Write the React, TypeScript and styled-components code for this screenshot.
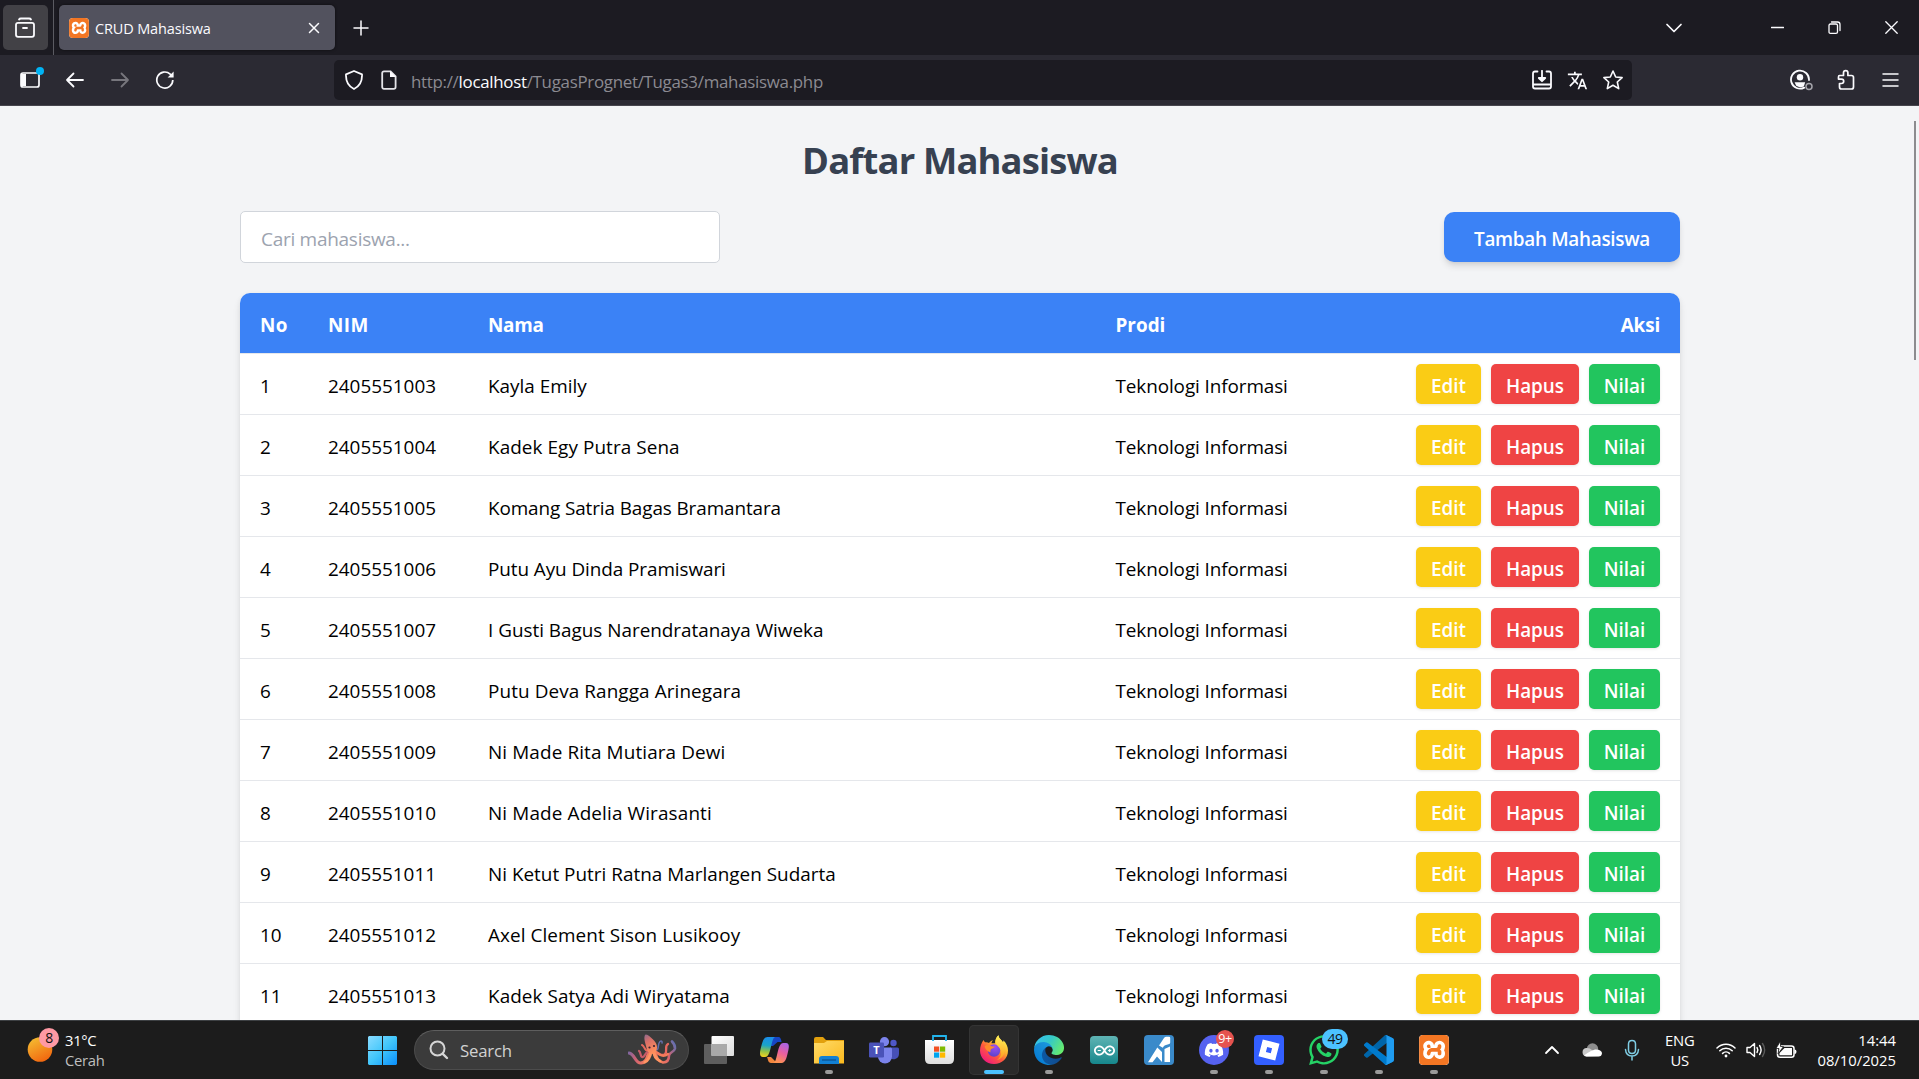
import React from "react";
import styled, { createGlobalStyle, css } from "styled-components";
import { FaDiscord, FaWhatsapp } from "react-icons/fa";
import { SiXampp, SiArduino } from "react-icons/si";
import { MdTranslate } from "react-icons/md";

const GlobalStyle = createGlobalStyle`
  * { box-sizing: border-box; }
  html, body { margin: 0; padding: 0; overflow: hidden; }
  body { font-family: "Open Sans", "Noto Sans", sans-serif; background: #1c1b22; }
  svg { display: block; flex: none; }
`;

const Desktop = styled.div`
  width: 1919px;
  height: 1079px;
  display: flex;
  flex-direction: column;
  overflow: hidden;
`;

/* ---------- browser chrome ---------- */

const TabStrip = styled.div`
  height: 55px;
  flex: none;
  display: flex;
  align-items: center;
  background: #1c1b22;
  color: #fbfbfe;
`;

const ViewButton = styled.div`
  width: 45px;
  height: 45px;
  margin-left: 3px;
  padding-right: 1px;
  border-radius: 5px;
  background: #424146;
  display: grid;
  place-items: center;
`;

const StripDivider = styled.div`
  width: 1px;
  height: 55px;
  margin: 0 5px;
  background: #5b5b62;
`;

const Tab = styled.div`
  width: 276px;
  height: 45px;
  border-radius: 5px;
  background: #52525e;
  box-shadow: 0 0 3px rgba(0, 0, 0, 0.6);
  display: flex;
  align-items: center;
  padding: 0 15px 0 10px;
`;

const TabTitle = styled.span`
  flex: 1;
  margin-left: 6px;
  font-size: 14.5px;
  letter-spacing: -0.15px;
  line-height: 20px;
  padding-top: 2px;
`;

const NewTab = styled.div`
  margin-left: 18px;
  flex: 1;
`;

const WindowControls = styled.div`
  display: flex;
  align-items: center;
  padding-right: 21px;
`;

const Toolbar = styled.div`
  height: 51px;
  flex: none;
  display: flex;
  align-items: center;
  background: #2b2a33;
  border-bottom: 1px solid #46454d;
  color: #fbfbfe;
`;

const NavButtons = styled.div`
  width: 334px;
  padding-left: 20px;
  display: flex;
  align-items: center;
  gap: 25px;
`;

const UrlBar = styled.div`
  width: 1298px;
  height: 40px;
  border-radius: 5px;
  background: #1c1b22;
  display: flex;
  align-items: center;
  padding: 0 9px 0 10px;
`;

const UrlText = styled.span`
  flex: 1;
  margin-left: 14px;
  padding-top: 3px;
  font-size: 16.9px;
  line-height: 24px;
  letter-spacing: -0.29px;
  color: #8b8a91;
  b { font-weight: 400; color: #fbfbfe; }
`;

const UrlActions = styled.div`
  display: flex;
  gap: 15px;
`;

const ToolbarActions = styled.div`
  flex: 1;
  display: flex;
  align-items: center;
  justify-content: flex-end;
  padding-right: 20px;
`;

/* ---------- page ---------- */

const Page = styled.main`
  flex: 1;
  min-height: 0;
  overflow: hidden;
  background: #f3f4f6;
  display: flex;
  justify-content: center;
  position: relative;
`;

const ScrollThumb = styled.div`
  position: absolute;
  right: 3px;
  top: 15px;
  width: 2px;
  height: 239px;
  background: #8c8c8f;
`;

const Container = styled.div`
  width: 1440px;
  flex: none;
  margin-left: 1px;
  padding-top: 30px;
`;

const Heading = styled.h1`
  margin: 0 0 30px;
  height: 45px;
  line-height: 49px;
  text-align: center;
  font-size: 36.4px;
  letter-spacing: -0.85px;
  font-weight: 700;
  color: #374151;
`;

const Controls = styled.div`
  display: flex;
  justify-content: space-between;
  align-items: center;
  height: 52px;
  margin-bottom: 30px;
`;

const SearchInput = styled.input`
  width: 480px;
  height: 52px;
  border: 1px solid #d1d5db;
  border-radius: 5px;
  padding: 4px 20px 0;
  background: #fff;
  font-family: inherit;
  font-size: 19px;
  letter-spacing: -0.28px;
  &::placeholder { color: #9ca3af; opacity: 1; }
`;

const AddButton = styled.button`
  width: 236px;
  height: 50px;
  border: 0;
  border-radius: 10px;
  padding: 4px 0 0;
  white-space: nowrap;
  background: #3b82f6;
  color: #fff;
  font: 600 18.9px/24px "Open Sans", "Noto Sans", sans-serif;
  letter-spacing: -0.3px;
  box-shadow: 0 5px 7px -1px rgba(0, 0, 0, 0.12), 0 2px 4px -2px rgba(0, 0, 0, 0.1);
`;

const Table = styled.div`
  height: 900px;
  border-radius: 10px 10px 0 0;
  background: #fff;
  overflow: hidden;
`;

const TableShadow = styled.div`
  border-radius: 10px;
  box-shadow: 0 5px 8px -1px rgba(0, 0, 0, 0.12), 0 0 5px rgba(0, 0, 0, 0.04);
`;

const rowGrid = css`
  display: grid;
  grid-template-columns: 68px 160px 627.5px 1fr 0fr;
  align-items: center;
  padding: 0 20px;
  font-size: 18.9px;
  line-height: 26px;
  white-space: nowrap;
`;

const HeaderRow = styled.div`
  ${rowGrid}
  height: 60px;
  background: #3b82f6;
  color: #fff;
  font-weight: 700;
  span { padding-top: 4px; }
`;

const Row = styled.div`
  ${rowGrid}
  height: 61px;
  border-top: 1px solid #e5e7eb;
  color: #000;
  span { padding-top: 3px; }
`;

const Cell = styled.span<{ $track?: number }>`
  letter-spacing: ${(p) => p.$track ?? 0}px;
`;

const Actions = styled.div`
  display: flex;
  gap: 10px;
`;

const tones = { edit: "#facc15", hapus: "#ef4444", nilai: "#22c55e" };

const ActionButton = styled.button<{ $tone: keyof typeof tones; $w: number }>`
  width: ${(p) => p.$w}px;
  height: 40px;
  border: 0;
  border-radius: 5px;
  padding: 4px 0 0;
  background: ${(p) => tones[p.$tone]};
  color: #fff;
  font: 600 18.9px/24px "Open Sans", "Noto Sans", sans-serif;
  letter-spacing: -0.05px;
  box-shadow: 0 1px 3px rgba(0, 0, 0, 0.1);
`;

/* ---------- taskbar ---------- */

const Taskbar = styled.footer`
  height: 59px;
  flex: none;
  background: #1c1c1c;
  border-top: 1px solid #3d4043;
  display: flex;
  align-items: center;
  color: #fff;
  font-size: 14.8px;
`;

const Weather = styled.div`
  width: 357px;
  display: flex;
  align-items: center;
  padding-left: 27px;
`;

const SunSlot = styled.div`
  position: relative;
  width: 38px;
  height: 58px;
  display: flex;
  align-items: center;
`;

const Badge = styled.span<{ $x: number; $y: number; $w: number; $h: number; $bg: string; $fg: string; $size: number }>`
  position: absolute;
  left: ${(p) => p.$x}px;
  top: ${(p) => p.$y}px;
  width: ${(p) => p.$w}px;
  height: ${(p) => p.$h}px;
  border-radius: 10px;
  background: ${(p) => p.$bg};
  color: ${(p) => p.$fg};
  font-size: ${(p) => p.$size}px;
  line-height: ${(p) => p.$h}px;
  letter-spacing: -0.4px;
  text-align: center;
`;

const TwoLines = styled.div<{ $align: string; $dim?: boolean; $track?: number }>`
  display: flex;
  flex-direction: column;
  text-align: ${(p) => p.$align};
  line-height: 20px;
  white-space: nowrap;
  letter-spacing: ${(p) => p.$track ?? 0}px;
  span:last-child { color: ${(p) => (p.$dim ? "#bfbfbf" : "#fff")}; }
`;

const Slot = styled.div<{ $active?: boolean }>`
  position: relative;
  width: 50px;
  height: 50px;
  flex: none;
  border-radius: 5px;
  display: grid;
  place-items: center;
  ${(p) => p.$active && "background: #2a2a2a; box-shadow: inset 0 0 0 1px #343434;"}
`;

const Indicator = styled.i<{ $active?: boolean }>`
  position: absolute;
  left: ${(p) => (p.$active ? 15 : 21)}px;
  top: 45px;
  width: ${(p) => (p.$active ? 20 : 8)}px;
  height: 4px;
  border-radius: 2px;
  background: ${(p) => (p.$active ? "#4cc2ff" : "#9a9a9a")};
`;

const SearchPill = styled.div`
  width: 275px;
  height: 40px;
  margin: 0 5px 0 7px;
  border-radius: 20px;
  background: #3b3b3b;
  border: 1px solid #4c4c4c;
  border-top-color: #5e5e5e;
  display: flex;
  align-items: center;
  padding: 0 11px 0 14px;
  span {
    flex: 1;
    margin-left: 11px;
    font-size: 16.8px;
    letter-spacing: -0.2px;
    color: #d2d2d2;
  }
`;

const Apps = styled.div`
  display: flex;
  gap: 5px;
`;

const AppTile = styled.div<{ $bg: string; $size?: number; $fg?: string }>`
  width: ${(p) => p.$size ?? 30}px;
  height: ${(p) => p.$size ?? 30}px;
  border-radius: 4px;
  background: ${(p) => p.$bg};
  color: ${(p) => p.$fg ?? "#fff"};
  display: grid;
  place-items: center;
  overflow: hidden;
`;

const Round = styled(AppTile)`
  border-radius: 50%;
`;

const Tray = styled.div`
  flex: 1;
  display: flex;
  align-items: center;
  justify-content: flex-end;
  padding-right: 23px;
`;

const Gap = styled.div<{ $w: number }>`
  width: ${(p) => p.$w}px;
  flex: none;
`;

const Line = ({ w, h, d, sw = 1.5, vb, color = "currentColor" }: { w: number; h: number; d: string; sw?: number; vb?: string; color?: string }) => (
  <svg width={w} height={h} viewBox={vb ?? `0 0 ${w} ${h}`} fill="none" stroke={color} strokeWidth={sw} strokeLinecap="round" strokeLinejoin="round">
    <path d={d} />
  </svg>
);

const Xampp = ({ size }: { size: number }) => (
  <AppTile $bg="linear-gradient(#fff 12%, #fff 88%)" $size={size} $fg="#f37623">
    <SiXampp size={size} />
  </AppTile>
);

const SidebarSvg = styled.svg`
  overflow: visible;
`;

const SidebarIcon = () => (
  <SidebarSvg width="20" height="24" viewBox="0 0 20 24">
    <rect x="1" y="5" width="18" height="14" rx="2" fill="none" stroke="#fbfbfe" strokeWidth="1.7" />
    <path d="M1 6h5v12H1z" fill="#fbfbfe" />
    <circle cx="20" cy="3" r="4" fill="#00b3f4" />
  </SidebarSvg>
);

const ReloadIcon = () => (
  <svg width="20" height="20" viewBox="0 0 20 20" fill="none" stroke="#fbfbfe" strokeWidth="1.7">
    <path d="M17.8 10a8 8 0 1 1-2.6-5.9L17 6" />
    <path d="M18.6 1.4v6h-6z" fill="#fbfbfe" stroke="none" />
  </svg>
);

const DocIcon = () => (
  <svg width="16" height="20" viewBox="0 0 16 20">
    <path d="M3 1.3h6.6l5 5V17a1.8 1.8 0 0 1-1.8 1.8H3A1.8 1.8 0 0 1 1.2 17V3A1.8 1.8 0 0 1 3 1.3z" fill="none" stroke="#e4e4e8" strokeWidth="1.8" />
    <path d="M9 1v6h6z" fill="#fbfbfe" />
  </svg>
);

const AccountIcon = () => (
  <svg width="24" height="22" viewBox="0 0 24 22">
    <path d="M14.2 18.6A9 9 0 1 1 19 11" fill="none" stroke="#fbfbfe" strokeWidth="1.8" strokeLinecap="round" />
    <circle cx="10" cy="8.2" r="3.2" fill="#fbfbfe" />
    <path d="M4.6 13.2h10.6l-1.4 4.2a8 8 0 0 1-7.6-.6z" fill="#fbfbfe" />
    <circle cx="19" cy="17.4" r="3" fill="none" stroke="#a5a4ab" strokeWidth="1.5" />
  </svg>
);

const WindowsIcon = () => (
  <svg width="29" height="29" viewBox="0 0 29 29">
    <defs>
      <linearGradient id="win" gradientUnits="userSpaceOnUse" x1="0" y1="0" x2="29" y2="29">
        <stop offset="0" stopColor="#8adcff" /><stop offset=".5" stopColor="#41c6fb" /><stop offset="1" stopColor="#0a8efb" />
      </linearGradient>
    </defs>
    <path fill="url(#win)" d="M1 0h13v14H0V1zM15 0h13l1 1v13H15zM0 15h14v14H1l-1-1zM15 15h14v13l-1 1H15z" />
  </svg>
);

const Magnifier = () => (
  <svg width="20" height="20" viewBox="0 0 20 20" fill="#4b4b4b" stroke="#d6d6d6" strokeWidth="2" strokeLinecap="round">
    <circle cx="8.5" cy="8.5" r="7" /><path d="M13.8 13.8l4.2 4.2" strokeWidth="2.4" />
  </svg>
);

const Octopus = () => (
  <svg width="49" height="32" viewBox="0 0 49 32" fill="none" strokeLinecap="round">
    <defs>
      <linearGradient id="octo" x1="0" y1="0" x2=".4" y2="1">
        <stop offset="0" stopColor="#8d6a8e" /><stop offset=".4" stopColor="#d96f68" /><stop offset="1" stopColor="#ff8e5c" />
      </linearGradient>
      <linearGradient id="arm" gradientUnits="userSpaceOnUse" x1="0" y1="16" x2="22" y2="24">
        <stop offset="0" stopColor="#7467a6" /><stop offset=".45" stopColor="#cf6172" /><stop offset="1" stopColor="#fb8459" />
      </linearGradient>
      <linearGradient id="armr" gradientUnits="userSpaceOnUse" x1="26" y1="22" x2="48" y2="10">
        <stop offset="0" stopColor="#fb8459" /><stop offset=".5" stopColor="#d9626c" /><stop offset="1" stopColor="#5a70b4" />
      </linearGradient>
    </defs>
    <path d="M21 18c-2 5-2 10-8 11-6 .5-6-9-12-10" stroke="url(#arm)" strokeWidth="3.2" />
    <path d="M27 18c2 5 2 9 8 10.500 5 0 6-4 6-7 1-4 5-3 6-7 .3-3-1-5-3-7" stroke="url(#armr)" strokeWidth="2.600" />
    <path d="M20 17c-4 0-3-5-6-6" stroke="#e5695e" strokeWidth="2" />
    <path d="M20 18c-4 1-3 6-6 5-2-1-1-5-3-6" stroke="#c85b68" strokeWidth="2.200" />
    <path d="M27 16c5 1 2-6 5-8.500 1.500-1 2.500 0 2 1.500" stroke="#666fae" strokeWidth="1.500" />
    <path d="M27 18c5 1 7 5 10 2s-1-8 3-10" stroke="#e8695f" strokeWidth="2.300" />
    <path d="M28 18c4 4 8 5 12 2" stroke="#f57c5b" strokeWidth="2.400" />
    <path d="M23 18c-1 5-2 8-6 10M26 18c0 5 2 7 6 9" stroke="#ff9463" strokeWidth="3" />
    <path d="M17.500.5c2 0 4.500 2 7 4.500s4.500 4.500 4.500 8c0 4-2 7-5 7-4 0-5-4-6-8-.6-3-3-9-.5-11.500z" fill="url(#octo)" />
    <circle cx="21.500" cy="13.500" r="1.100" fill="#3b2230" /><circle cx="26" cy="12" r="1.100" fill="#3b2230" />
  </svg>
);

const TaskView = () => (
  <svg width="30" height="28" viewBox="0 0 30 28">
    <defs><linearGradient id="tv" x1="0" y1="0" x2="1" y2="1"><stop offset="0" stopColor="#fff" /><stop offset="1" stopColor="#dcdcdc" /></linearGradient></defs>
    <rect y="8" width="23" height="20" rx="1" fill="#5e5e5e" />
    <rect x="7.5" width="22.5" height="20" rx="1" fill="url(#tv)" />
    <path d="M7.5 8H23v12H7.5z" fill="#a9a9a9" />
  </svg>
);

const Copilot = () => (
  <svg width="29" height="26" viewBox="0 0 29 26">
    <defs>
      <linearGradient id="cpa" x1=".3" y1="0" x2=".2" y2="1"><stop offset="0" stopColor="#1b8ee8" /><stop offset=".4" stopColor="#1aa4c8" /><stop offset=".7" stopColor="#8fc24a" /><stop offset="1" stopColor="#f7d21c" /></linearGradient>
      <linearGradient id="cpb" x1=".8" y1="0" x2=".4" y2="1"><stop offset="0" stopColor="#a765e8" /><stop offset=".5" stopColor="#ea5fa0" /><stop offset="1" stopColor="#fd9350" /></linearGradient>
    </defs>
    <path d="M8 0h10c2.6 0 3 2 3.6 5h-4L13 9H9z" fill="#1746c4" />
    <path d="M11 20l6 6h-6C8 26 8 22 7 20z" fill="#f1873e" />
    <path d="M7.500 0H15c-2 1-2.600 4-3.600 8-1.600 6-2.400 12-6.400 12H3c-3 0-3.500-3-2.600-7C1.800 7 3 0 7.500 0z" fill="url(#cpa)" />
    <path d="M21.500 26H13c2.500-1 3-4 4-8 1.600-6 2.400-12 6.400-12H26c3 0 3.300 3 2.400 7-1.400 6-2.400 13-6.900 13z" fill="url(#cpb)" />
  </svg>
);

const Folder = () => (
  <svg width="30" height="27" viewBox="0 0 30 27">
    <defs><linearGradient id="fold" x1="0" y1="0" x2="1" y2="1"><stop offset="0" stopColor="#ffdb69" /><stop offset="1" stopColor="#fbb91d" /></linearGradient></defs>
    <path d="M0 2q0-2 2-2h7l3 3h18v6H0z" fill="#e2a00d" />
    <path d="M0 6h10l3-2h17v22.500H0z" fill="url(#fold)" />
    <path d="M5 27v-5q0-3 3-3h14q3 0 3 3v5z" fill="#1280d3" />
    <path d="M8 23h14" stroke="#0c5290" strokeWidth="1.300" />
  </svg>
);

const TeamsText = styled.text`
  font: 700 11px "Open Sans", sans-serif;
  fill: #fff;
`;

const Teams = () => (
  <svg width="30" height="27" viewBox="0 0 30 27">
    <circle cx="24.500" cy="6" r="3.200" fill="#4f58c8" />
    <path d="M21 10.500h7.500q1.500 0 1.500 1.500v5a5.500 5.500 0 0 1-9 4z" fill="#4750b8" />
    <circle cx="15.500" cy="4.700" r="4.600" fill="#7b83eb" />
    <path d="M9 10.500h12.500q1.500 0 1.500 1.500v7.500a7 7 0 0 1-14 0z" fill="#7b83eb" />
    <rect y="5.500" width="15" height="15" rx="1.300" fill="#4a52b8" />
    <TeamsText x="7.500" y="17" textAnchor="middle">T</TeamsText>
  </svg>
);

const Store = () => (
  <svg width="29" height="30" viewBox="0 0 29 30">
    <defs><linearGradient id="store" x1="0" y1="0" x2="0" y2="1"><stop offset="0" stopColor="#fff" /><stop offset="1" stopColor="#dedede" /></linearGradient></defs>
    <path d="M0 5h29v19q0 5-5 5H5q-5 0-5-5z" fill="url(#store)" />
    <path d="M8 6V1h13v5" stroke="#22b4ec" strokeWidth="1.800" fill="none" />
    <path d="M9 11.500h5.200v5.200H9z" fill="#f25022" /><path d="M15 11.500h5.200v5.200H15z" fill="#7fba00" />
    <path d="M9 17.500h5.200v5.200H9z" fill="#00a4ef" /><path d="M15 17.500h5.200v5.200H15z" fill="#ffb900" />
  </svg>
);

const Firefox = () => (
  <svg width="30" height="30" viewBox="0 0 30 30">
    <defs>
      <linearGradient id="ffx" x1=".85" y1=".1" x2=".2" y2=".95"><stop offset="0" stopColor="#fff44f" /><stop offset=".35" stopColor="#ffb02e" /><stop offset=".6" stopColor="#ff5a3c" /><stop offset="1" stopColor="#f0187f" /></linearGradient>
      <linearGradient id="ffy" x1="0" y1="0" x2="0" y2="1"><stop offset="0" stopColor="#fff25a" /><stop offset="1" stopColor="#ff9a1c" /></linearGradient>
      <radialGradient id="ffg" cx=".6" cy=".2" r=".9"><stop offset="0" stopColor="#a04cf2" /><stop offset=".6" stopColor="#7049d8" /><stop offset="1" stopColor="#5a3fc0" /></radialGradient>
    </defs>
    <path d="M4.500 5c.5 1 .9 1.700 1.500 2.300C7.500 7 9 7.300 10 8c1-1.500 2.500-2.500 4-2.800-1 1-1.400 2-1.500 3H16c0-3 1-6 3.500-8 .2 3.300 3 4.600 4.500 7 .4-.7.400-1.300.300-2C27.500 8 29 12 29 15.500 29 23.500 23 29 15 29S1 23 1 15.500C1 11.500 2.500 7.500 4.500 5z" fill="url(#ffx)" />
    <circle cx="15" cy="15.500" r="6.200" fill="url(#ffg)" />
    <path d="M19.500.2c.2 3.300 3 4.600 4.500 7 2.500 4 2.600 9 .5 12.800-1.500 3-4.500 4.500-6.500 5 3-2 4.500-5 4.200-8.200C22 12.500 17 11 16.500 6.500c.1-2.500 1.200-4.800 3-6.300z" fill="url(#ffy)" />
    <path d="M5.500 11.500c2-1.800 4.500-1.800 6.500-.6 1.500.8 3 .4 3.800.6-.4 1.800-3.400 1.800-4 3-.4.900-.6 1.800-.2 2.800-2.200-.2-4.800-2-6.100-5.800z" fill="#ff8a2a" />
  </svg>
);

const Edge = () => (
  <svg width="30" height="30" viewBox="0 0 256 256">
    <defs>
      <linearGradient id="e1" x1="0" y1="0" x2="1" y2="0"><stop offset="0" stopColor="#0c59a4" /><stop offset="1" stopColor="#114a8b" /></linearGradient>
      <linearGradient id="e2" x1=".9" y1="0" x2=".1" y2="1"><stop offset="0" stopColor="#1b9de2" /><stop offset=".5" stopColor="#1489d5" /><stop offset="1" stopColor="#0078d4" /></linearGradient>
      <linearGradient id="e3" x1="0" y1=".2" x2="1" y2=".6"><stop offset="0" stopColor="#35c1f1" /><stop offset=".5" stopColor="#36c9c6" /><stop offset="1" stopColor="#66eb6e" /></linearGradient>
    </defs>
    <path fill="url(#e1)" d="M231 190.500c-3.400 1.800-6.900 3.400-10.500 4.700a101.500 101.500 0 0 1-35.900 6.500c-47.300 0-88.500-32.500-88.500-74.300 0-11.500 6.400-21.900 16.300-27.300-42.800 1.800-53.800 46.400-53.800 72.500 0 73.900 68.100 81.400 82.800 81.400 7.900 0 19.800-2.300 27-4.600l1.300-.4a128.300 128.300 0 0 0 66.600-52.800 4 4 0 0 0-5.300-5.700z" />
    <path fill="url(#e2)" d="M105.700 241.400A79.200 79.200 0 0 1 83 220.100a80.700 80.700 0 0 1 29.500-120c3.200-1.500 8.500-4.100 15.600-4a32.400 32.400 0 0 1 25.700 13 31.900 31.900 0 0 1 6.300 18.700c0-.2 24.500-79.600-80-79.600-43.900 0-80 41.600-80 78.200a130.200 130.200 0 0 0 12.100 56 128 128 0 0 0 156.400 67 75.600 75.600 0 0 1-62.800-8z" />
    <path fill="url(#e3)" d="M152.300 148.900c-.9 1-3.400 2.500-3.400 5.600 0 2.600 1.700 5.200 4.800 7.300 14.400 10.100 41.700 8.700 41.800 8.700a59.700 59.700 0 0 0 30.300-8.400 61.400 61.400 0 0 0 30.400-52.900c.3-22.400-8-37.300-11.300-43.900C223.500 23.900 177.700 0 128 0A128 128 0 0 0 0 126.200c.5-36.500 36.800-66 80-66 3.500 0 23.500.3 42 10.100 16.300 8.600 24.900 18.900 30.800 29.200 6.200 10.700 7.300 24.100 7.300 29.500 0 5.300-2.700 13.300-7.800 19.900z" />
  </svg>
);

const AiMark = () => (
  <svg width="30" height="30" viewBox="0 0 30 30" fill="#fff">
    <path d="M15 10.500l5-7.500q.8-1.200 2.500-1.200H25q1.200 0 1.200 1.200v4.500q0 1.200-1 1.500l-4 1.200q-1 .3-1.600 1.300l-.8 1.200z" />
    <path d="M13.300 12.500l4.700 4.500v10l-5-5.500-4.500 5.700H4z" />
    <path d="M20.500 14l5.500-2.500V27h-5.500z" />
  </svg>
);

const RobloxMark = () => (
  <svg width="30" height="30" viewBox="0 0 30 30">
    <path d="M8.800 4.500l16.700 4.300-4.300 16.700L4.500 21.200zM13.200 12l-1.300 4.900 4.900 1.300 1.300-4.900z" fill="#fff" fillRule="evenodd" />
  </svg>
);

const VsCode = () => (
  <svg width="30" height="30" viewBox="0 0 100 100">
    <path fill="#0065a9" d="M96.460 10.800L75.860.88a6.230 6.230 0 0 0-7.100 1.200L1.300 63.600a4.170 4.170 0 0 0 0 6.170l5.500 5a4.170 4.170 0 0 0 5.320.24l81.200-61.600c2.700-2.070 6.600-.13 6.600 3.300v-.24a6.250 6.250 0 0 0-3.500-5.630z" />
    <path fill="#007acc" d="M96.460 89.200l-20.600 9.900a6.230 6.230 0 0 1-7.100-1.200L1.300 36.400a4.170 4.170 0 0 1 0-6.170l5.500-5a4.170 4.170 0 0 1 5.320-.24l81.200 61.600c2.700 2.070 6.600.13 6.600-3.300v.24a6.250 6.250 0 0 1-3.500 5.630z" />
    <path fill="#1f9cf0" d="M75.860 99.130a6.230 6.230 0 0 1-7.100-1.200c2.300 2.300 6.240.67 6.240-2.600V4.660c0-3.260-3.940-4.900-6.240-2.600a6.230 6.230 0 0 1 7.100-1.200l20.600 9.900A6.250 6.250 0 0 1 100 16.400v67.200a6.250 6.250 0 0 1-3.540 5.630z" />
  </svg>
);

const Cloud = () => (
  <svg width="20" height="14" viewBox="0 0 20 14">
    <circle cx="10.500" cy="6" r="5.700" fill="#8e8e8e" />
    <path d="M4.500 13.500A4.300 4.300 0 0 1 4 5q3.500-.5 6 2l9 6z" fill="#c9c9c9" />
    <path d="M2 12.500q3-2.500 7-4.500 2-1 4-1.500 6-.5 7 3.500-.2 3.500-3.500 3.500h-12z" fill="#fff" />
  </svg>
);

const Wifi = () => (
  <svg width="20" height="16" viewBox="0 0 20 16" fill="none" stroke="#fff" strokeWidth="1.500" strokeLinecap="round">
    <path d="M1 6a12.500 12.500 0 0 1 18 0M3.800 8.800a8.700 8.700 0 0 1 12.400 0M6.600 11.400a4.900 4.900 0 0 1 6.800 0" />
    <circle cx="10" cy="14" r="1.400" fill="#fff" stroke="none" />
  </svg>
);

const Speaker = () => (
  <svg width="20" height="18" viewBox="0 0 20 18" fill="none" stroke="#fff" strokeWidth="1.400" strokeLinecap="round" strokeLinejoin="round">
    <path d="M1 6.500h3L8.500 2.500v13L4 11.500H1z" />
    <path d="M11 6.500q1.600 2.500 0 5M13.600 4.500q3 4.500 0 9" />
    <path d="M16.500 2.500q4.300 6.500 0 13" stroke="#5a5a5a" />
  </svg>
);

const Battery = () => (
  <svg width="21" height="18" viewBox="0 0 21 18">
    <rect x="1.500" y="5" width="16.500" height="11.300" rx="2.500" fill="none" stroke="#fff" strokeWidth="1.500" />
    <path d="M18.500 8.500q2 0 2 2.200t-2 2.200z" fill="#fff" />
    <path d="M8.500 7H16v7.300H3.500V12z" fill="#fff" />
    <path d="M4.500 0L0 7.500h3L2 13l5.500-7.500h-3z" fill="#fff" stroke="#1c1c1c" strokeWidth=".8" />
  </svg>
);

const students = [
  { nama: "Kayla Emily", track: 0 },
  { nama: "Kadek Egy Putra Sena", track: 0.08 },
  { nama: "Komang Satria Bagas Bramantara", track: -0.1 },
  { nama: "Putu Ayu Dinda Pramiswari", track: -0.07 },
  { nama: "I Gusti Bagus Narendratanaya Wiweka", track: -0.01 },
  { nama: "Putu Deva Rangga Arinegara", track: 0.1 },
  { nama: "Ni Made Rita Mutiara Dewi", track: 0.12 },
  { nama: "Ni Made Adelia Wirasanti", track: 0.14 },
  { nama: "Ni Ketut Putri Ratna Marlangen Sudarta", track: 0.01 },
  { nama: "Axel Clement Sison Lusikooy", track: 0.08 },
  { nama: "Kadek Satya Adi Wiryatama", track: 0.08 },
].map((s, i) => ({ ...s, no: i + 1, nim: String(2405551003 + i), prodi: "Teknologi Informasi" }));

export default function App() {
  return (
    <Desktop>
      <GlobalStyle />
      <TabStrip>
        <ViewButton>
          <Line w={22} h={22} sw={1.8} d="M5 2.500q.500-1 2-1h8q1.500 0 2 1M4 5.800h14q2 0 2 2v10q0 2-2 2H4q-2 0-2-2v-10q0-2 2-2zM9 11h4" />
        </ViewButton>
        <StripDivider />
        <Tab>
          <Xampp size={20} />
          <TabTitle>CRUD Mahasiswa</TabTitle>
          <Line w={12} h={12} d="M1.500 1.500l9 9M10.500 1.500l-9 9" />
        </Tab>
        <NewTab>
          <Line w={16} h={16} d="M8 1v14M1 8h14" />
        </NewTab>
        <WindowControls>
          <Line w={18} h={10} sw={1.700} d="M2 1.500l7 7 7-7" />
          <Gap $w={88} />
          <Line w={13} h={13} sw={1.300} d="M.5 6.500h12" />
          <Gap $w={44} />
          <Line w={13} h={13} sw={1.300} d="M3.500 1h6q2.500 0 2.500 2.500v6M2.500 3h5.500q1.500 0 1.500 1.500V11q0 1.300-1.500 1.300H2.500Q1 12.300 1 11V4.500Q1 3 2.500 3z" />
          <Gap $w={44} />
          <Line w={13} h={13} sw={1.300} d="M.8.8l11.400 11.400M12.200.8L.8 12.200" />
        </WindowControls>
      </TabStrip>

      <Toolbar>
        <NavButtons>
          <SidebarIcon />
          <Line w={20} h={20} sw={1.800} d="M18 10H2M8.500 3.500L2 10l6.500 6.500" />
          <Line w={20} h={20} sw={1.800} color="#77767d" d="M2 10h16M11.500 3.500L18 10l-6.500 6.500" />
          <ReloadIcon />
        </NavButtons>
        <UrlBar>
          <Line w={20} h={20} sw={1.800} d="M10 1l8 3.300c.3 6-1.500 11.500-8 14.700C3.500 15.800 1.700 10.300 2 4.300z" />
          <Gap $w={17} />
          <DocIcon />
          <UrlText>http://<b>localhost</b>/TugasPrognet/Tugas3/mahasiswa.php</UrlText>
          <UrlActions>
            <Line w={20} h={20} sw={1.800} d="M5.500 1.500H3q-2 0-2 2v13q0 2 2 2h14q2 0 2-2v-13q0-2-2-2h-2.500M1 14.500h18M10 .8v10M6.800 8L10 11.200 13.200 8z" />
            <MdTranslate size={21} />
            <Line w={20} h={20} sw={1.600} d="M10 1l2.700 6 6.400.6-4.800 4.400 1.400 6.600L10 15.200 4.300 18.600 5.700 12 .9 7.600 7.300 7z" />
          </UrlActions>
        </UrlBar>
        <ToolbarActions>
          <AccountIcon />
          <Gap $w={22} />
          <Line w={20} h={22} sw={1.700} d="M3.500 6.500h4V3.800a2.200 2.200 0 0 1 4.400 0v2.700h3.600q2 0 2 2V18q0 2-2 2h-10q-2 0-2-2v-3.500h2a2.200 2.200 0 0 0 0-4.400h-3V8q0-1.500 1-1.500z" />
          <Gap $w={26} />
          <Line w={17} h={16} sw={1.500} d="M1 2h15M1 8h15M1 14h15" />
        </ToolbarActions>
      </Toolbar>

      <Page>
        <Container>
          <Heading>Daftar Mahasiswa</Heading>
          <Controls>
            <SearchInput placeholder="Cari mahasiswa..." />
            <AddButton>Tambah Mahasiswa</AddButton>
          </Controls>
          <TableShadow>
            <Table>
              <HeaderRow>
                <Cell $track={0.3}>No</Cell>
                <Cell $track={0.4}>NIM</Cell>
                <Cell $track={-0.25}>Nama</Cell>
                <Cell>Prodi</Cell>
                <Cell $track={-0.15}>Aksi</Cell>
              </HeaderRow>
              {students.map((s) => (
                <Row key={s.no}>
                  <Cell>{s.no}</Cell>
                  <Cell>{s.nim}</Cell>
                  <Cell $track={s.track}>{s.nama}</Cell>
                  <Cell $track={-0.09}>{s.prodi}</Cell>
                  <Actions>
                    <ActionButton $tone="edit" $w={65}>Edit</ActionButton>
                    <ActionButton $tone="hapus" $w={88}>Hapus</ActionButton>
                    <ActionButton $tone="nilai" $w={71}>Nilai</ActionButton>
                  </Actions>
                </Row>
              ))}
            </Table>
          </TableShadow>
        </Container>
        <ScrollThumb />
      </Page>

      <Taskbar>
        <Weather>
          <SunSlot>
            <svg width="26" height="26" viewBox="0 0 26 26">
              <defs><linearGradient id="sun" x1=".2" y1="0" x2=".7" y2="1"><stop offset="0" stopColor="#f4bd32" /><stop offset="1" stopColor="#f2640e" /></linearGradient></defs>
              <circle cx="13" cy="12.500" r="12.300" fill="url(#sun)" />
            </svg>
            <Badge $x={12} $y={7} $w={20} $h={20} $bg="#ff99a4" $fg="#111" $size={14}>8</Badge>
          </SunSlot>
          <TwoLines $align="left" $dim $track={-0.3}>
            <span>31°C</span>
            <span>Cerah</span>
          </TwoLines>
        </Weather>
        <Slot><WindowsIcon /></Slot>
        <SearchPill>
          <Magnifier />
          <span>Search</span>
          <Octopus />
        </SearchPill>
        <Apps>
          <Slot><TaskView /></Slot>
          <Slot><Copilot /></Slot>
          <Slot><Folder /><Indicator /></Slot>
          <Slot><Teams /></Slot>
          <Slot><Store /></Slot>
          <Slot $active><Firefox /><Indicator $active /></Slot>
          <Slot><Edge /><Indicator /></Slot>
          <Slot><AppTile $bg="linear-gradient(#5fb4b4, #16878c)" $size={28}><SiArduino size={21} /></AppTile></Slot>
          <Slot><AppTile $bg="#3a8aca"><AiMark /></AppTile></Slot>
          <Slot>
            <Round $bg="#5662f0"><FaDiscord size={20} /></Round>
            <Badge $x={27} $y={5} $w={18} $h={18} $bg="#e5534f" $fg="#fff" $size={12.500}>9+</Badge>
            <Indicator />
          </Slot>
          <Slot><AppTile $bg="#335fff"><RobloxMark /></AppTile><Indicator /></Slot>
          <Slot>
            <FaWhatsapp size={34} color="#25d366" />
            <Badge $x={23} $y={4} $w={26} $h={20} $bg="#4cc2ff" $fg="#111" $size={14}>49</Badge>
            <Indicator />
          </Slot>
          <Slot><VsCode /><Indicator /></Slot>
          <Slot><Xampp size={30} /><Indicator /></Slot>
        </Apps>
        <Tray>
          <Line w={16} h={10} sw={1.800} d="M2 8l6-6 6 6" />
          <Gap $w={22} />
          <Cloud />
          <Gap $w={22} />
          <Line w={16} h={22} sw={1.500} color="#7fcde4" d="M8 1.500q3.500 0 3.500 3.500v6q0 3.500-3.500 3.500T4.500 11V5q0-3.500 3.500-3.500zM1.500 10.500q.5 6.500 6.500 6.500t6.500-6.500M8 17v4" />
          <Gap $w={25} />
          <TwoLines $align="center" $track={-0.2}>
            <span>ENG</span>
            <span>US</span>
          </TwoLines>
          <Gap $w={22} />
          <Wifi />
          <Gap $w={10} />
          <Speaker />
          <Gap $w={10} />
          <Battery />
          <Gap $w={20} />
          <TwoLines $align="right">
            <span>14:44</span>
            <span>08/10/2025</span>
          </TwoLines>
        </Tray>
      </Taskbar>
    </Desktop>
  );
}
